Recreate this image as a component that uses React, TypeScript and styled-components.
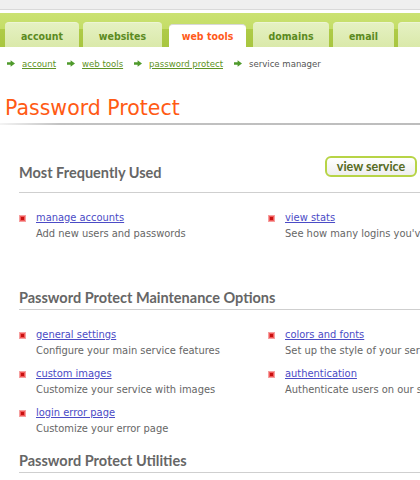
import React from 'react';
import styled, { createGlobalStyle } from 'styled-components';

type Tab = { label: string; width: number; active?: boolean };

type Item = { link: string; desc: string };

const tabs: Tab[] = [
  { label: 'account', width: 74 },
  { label: 'websites', width: 79 },
  { label: 'web tools', width: 77, active: true },
  { label: 'domains', width: 76 },
  { label: 'email', width: 61 },
  { label: 'ftp', width: 70 },
];

const crumbs = ['account', 'web tools', 'password protect'];

const frequent: Item[] = [
  { link: 'manage accounts', desc: 'Add new users and passwords' },
  { link: 'view stats', desc: "See how many logins you've had recently" },
];

const maintenance: Item[] = [
  { link: 'general settings', desc: 'Configure your main service features' },
  { link: 'colors and fonts', desc: 'Set up the style of your service pages' },
  { link: 'custom images', desc: 'Customize your service with images' },
  { link: 'authentication', desc: 'Authenticate users on our secure server' },
  { link: 'login error page', desc: 'Customize your error page' },
];

const GlobalStyle = createGlobalStyle`
  html, body {
    margin: 0;
    padding: 0;
    overflow: hidden;
    background: #fff;
  }
`;

const Page = styled.div`
  width: 420px;
  overflow: hidden;
  font-family: "DejaVu Sans Condensed", "DejaVu Sans", sans-serif;
  font-stretch: condensed;
`;

const TopStrip = styled.div`
  height: 9px;
  background: #efefef;
  border-bottom: 1px solid #d9d9d9;
  margin-bottom: 3px;
`;

const TabBand = styled.div`
  height: 34px;
  box-sizing: border-box;
  padding-left: 5px;
  display: flex;
  align-items: flex-end;
  gap: 4px;
  background: linear-gradient(
    to bottom,
    #cbe273 0,
    #c4dd66 16px,
    #afcb47 16px,
    #a8c63f 100%
  );
`;

const TabItem = styled.div<{ $active?: boolean; $width: number }>`
  flex: none;
  width: ${(p) => p.$width}px;
  height: ${(p) => (p.$active ? 23 : 25)}px;
  margin: ${(p) => (p.$active ? '0 3px' : '0')};
  box-sizing: border-box;
  border-radius: 4px 4px 0 0;
  border-top: 1px solid ${(p) => (p.$active ? '#d8d8d8' : '#edf5d4')};
  background: ${(p) =>
    p.$active ? '#fff' : 'linear-gradient(to bottom, #e5f1c2, #dae9aa)'};
  color: ${(p) => (p.$active ? '#ff5a1a' : '#5b8a1f')};
  font-size: 10.5px;
  font-weight: bold;
  display: flex;
  align-items: center;
  justify-content: center;
  padding-top: ${(p) => (p.$active ? 0 : 2)}px;
  white-space: nowrap;
`;

const Breadcrumb = styled.div`
  height: 32px;
  display: flex;
  align-items: center;
  padding-left: 7px;
  font-size: 9.5px;
  white-space: nowrap;
`;

const Crumb = styled.span`
  display: flex;
  align-items: center;
  gap: 7px;
  margin-right: 11px;
`;

const CrumbLink = styled.a`
  color: #5e9324;
  text-decoration: underline;
`;

const CrumbCurrent = styled.span`
  color: #555;
`;

const Title = styled.h1`
  margin: 16px 0 0 5px;
  font-family: "DejaVu Sans", sans-serif;
  font-stretch: normal;
  font-size: 20.5px;
  line-height: 26px;
  font-weight: normal;
  color: #ff5a14;
`;

const TitleRule = styled.div`
  height: 2px;
  margin-top: 2px;
  background: linear-gradient(to right, #f4f4f4 0, #c2c2c2 60px, #bdbdbd 100%);
`;

const Content = styled.div`
  padding-left: 19px;
`;

const SectionHeader = styled.div<{ $top: number; $tall?: boolean }>`
  display: flex;
  align-items: flex-end;
  justify-content: space-between;
  margin-top: ${(p) => p.$top}px;
  padding: 0 3px ${(p) => (p.$tall ? 10 : 2)}px 0;
  border-bottom: 1px solid #cfcfcf;
`;

const SectionTitle = styled.h2`
  margin: 0;
  font-family: Lato, sans-serif;
  font-stretch: normal;
  font-size: 14.5px;
  line-height: 18px;
  font-weight: bold;
  color: #666;
`;

const ViewButton = styled.button`
  width: 92px;
  height: 21px;
  margin-bottom: 5px;
  padding: 0;
  border: 2px solid #b7d446;
  border-radius: 6px;
  background: linear-gradient(to bottom, #fff, #eeeeee);
  font-family: Lato, sans-serif;
  font-size: 12.5px;
  font-weight: bold;
  color: #566b22;
`;

const ItemGrid = styled.div`
  display: grid;
  grid-template-columns: 249px 300px;
  row-gap: 7px;
  margin-top: 17px;
`;

const ItemRow = styled.div`
  display: flex;
  white-space: nowrap;
`;

const Bullet = styled.span`
  flex: none;
  width: 7px;
  height: 7px;
  box-sizing: border-box;
  margin: 5px 10px 0 0;
  border: 1px solid #f5a0a0;
  background: #f25a5a;
  display: flex;
  align-items: center;
  justify-content: center;

  &::after {
    content: '';
    width: 3px;
    height: 3px;
    background: #c81010;
  }
`;

const ItemText = styled.div`
  font-size: 11px;
  line-height: 16px;
`;

const ItemLink = styled.a`
  display: block;
  width: fit-content;
  color: #4b4bc6;
  text-decoration: underline;
`;

const ItemDesc = styled.div`
  color: #666;
`;

const Arrow = () => (
  <svg width="8" height="7" viewBox="0 0 8 7">
    <path d="M0 2.2h3.6V0.2L8 3.5 3.6 6.8V4.8H0z" fill="#4f9a2c" />
  </svg>
);

const Items = ({ items }: { items: Item[] }) => (
  <ItemGrid>
    {items.map((item) => (
      <ItemRow key={item.link}>
        <Bullet />
        <ItemText>
          <ItemLink>{item.link}</ItemLink>
          <ItemDesc>{item.desc}</ItemDesc>
        </ItemText>
      </ItemRow>
    ))}
  </ItemGrid>
);

export default function App() {
  return (
    <Page>
      <GlobalStyle />
      <TopStrip />
      <TabBand>
        {tabs.map((tab) => (
          <TabItem key={tab.label} $active={tab.active} $width={tab.width}>
            {tab.label}
          </TabItem>
        ))}
      </TabBand>
      <Breadcrumb>
        {crumbs.map((c) => (
          <Crumb key={c}>
            <Arrow />
            <CrumbLink>{c}</CrumbLink>
          </Crumb>
        ))}
        <Crumb>
          <Arrow />
          <CrumbCurrent>service manager</CrumbCurrent>
        </Crumb>
      </Breadcrumb>
      <Title>Password Protect</Title>
      <TitleRule />
      <Content>
        <SectionHeader $top={31} $tall>
          <SectionTitle>Most Frequently Used</SectionTitle>
          <ViewButton>view service</ViewButton>
        </SectionHeader>
        <Items items={frequent} />
        <SectionHeader $top={47}>
          <SectionTitle>Password Protect Maintenance Options</SectionTitle>
        </SectionHeader>
        <Items items={maintenance} />
        <SectionHeader $top={15}>
          <SectionTitle>Password Protect Utilities</SectionTitle>
        </SectionHeader>
      </Content>
    </Page>
  );
}
